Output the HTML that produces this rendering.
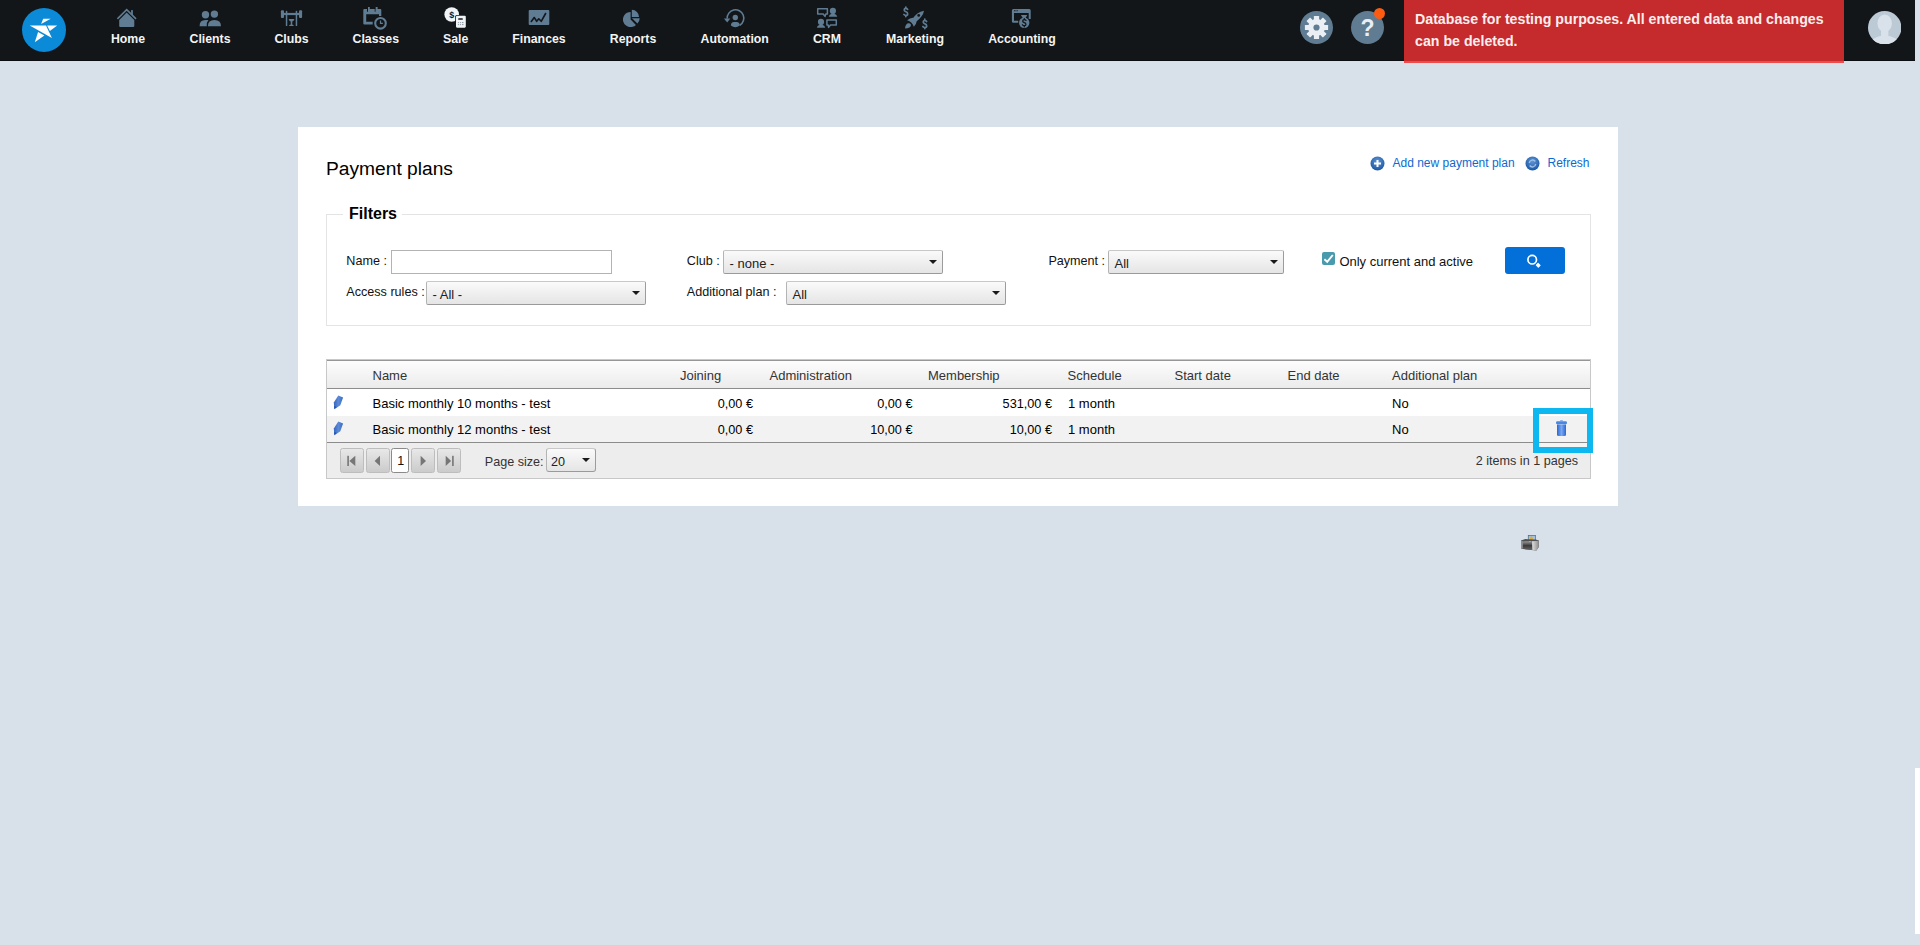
<!DOCTYPE html>
<html><head><meta charset="utf-8">
<style>
*{margin:0;padding:0;box-sizing:border-box}
html,body{width:1920px;height:945px;overflow:hidden;background:#d8e1ea;font-family:"Liberation Sans",sans-serif}
.a{position:absolute}
.t{position:absolute;line-height:1;white-space:nowrap}
#nav{position:absolute;left:0;top:0;width:1915px;height:61px;background:#121619;border-bottom:1px solid #0b0d10}
.nl{position:absolute;top:33px;font-weight:bold;font-size:12.3px;color:#f4f4f4;line-height:1;white-space:nowrap;transform:translateX(-50%)}
.ic{position:absolute;fill:#5f7c93}
.lbl{position:absolute;line-height:1;white-space:nowrap;font-size:12.6px;color:#111}
.sel{position:absolute;height:24px;width:220px;border:1px solid #b4b4b4;border-right-color:#9c9c9c;border-bottom-color:#9a9a9a;border-top-color:#c8c8c8;border-radius:2px;background:linear-gradient(#fafafa,#e5e5e5)}
.sel span{position:absolute;left:5.5px;top:5.5px;font-size:13px;line-height:1;color:#222;white-space:nowrap}
.sel i{position:absolute;right:5px;top:9px;width:0;height:0;border-left:4px solid transparent;border-right:4px solid transparent;border-top:4.5px solid #1a1a1a}
.gt{position:absolute;line-height:1;white-space:nowrap;font-size:13px;color:#000}
.gh{position:absolute;line-height:1;white-space:nowrap;font-size:13px;color:#333;top:369px}
.gr{text-align:right;transform:translateX(-100%)}
.num{font-size:12.7px}
.pb{position:absolute;top:448px;height:24.5px;width:23.5px;border:1px solid #bdbdbd;border-radius:2.5px;background:linear-gradient(#e8e8e8,#cbcbcb)}
#panel{position:absolute;left:298px;top:127px;width:1320px;height:379px;background:#fff}
</style></head>
<body>
<div id="nav">
  <svg class="a" style="left:22px;top:8px" width="44" height="44" viewBox="0 0 44 44">
    <circle cx="22" cy="22" r="22" fill="#0b8ad8"/>
    <polygon fill="#fff" points="7.7,17.4 24,17.4 29.9,29.9"/>
    <polygon fill="#fff" points="25.1,17.4 35.2,17.4 27.9,22.9"/>
    <polygon fill="#fff" points="16.1,24 22.4,27.5 12.8,34.3"/>
    <polygon fill="#fff" points="21.2,10.8 28.7,10.8 19.1,16.1"/>
  </svg>

  <!-- Home -->
  <svg class="a" style="left:112px;top:4px" width="30" height="28" viewBox="0 0 30 28">
    <polyline points="5.4,14.9 14.7,5.6 24,14.9" fill="none" stroke="#5f7c93" stroke-width="1.6"/>
    <rect x="19.1" y="6.1" width="1.8" height="4.8" fill="#5f7c93"/>
    <path d="M7.2,16 L14.7,8.6 L22.3,16 L22.3,22 Q22.3,23.1 21.2,23.1 L8.3,23.1 Q7.2,23.1 7.2,22 Z" fill="#5f7c93"/>
  </svg>
  <!-- Clients -->
  <svg class="a" style="left:196px;top:4px" width="30" height="28" viewBox="0 0 30 28">
    <circle cx="9.5" cy="10.8" r="3.7" fill="#5f7c93"/>
    <circle cx="18.4" cy="10.1" r="3.7" fill="#5f7c93"/>
    <path d="M3.6,22.2 Q3.4,16 9.6,16 L12.4,16 Q10.4,18.2 10.8,22.2 Z" fill="#5f7c93"/>
    <path d="M11.9,22.2 Q11.9,16 18.4,16 Q25,16 25,22.2 Z" fill="#5f7c93"/>
  </svg>
  <!-- Clubs -->
  <svg class="a" style="left:276px;top:4px" width="30" height="28" viewBox="0 0 30 28">
    <rect x="4.9" y="6.2" width="3.1" height="7.7" rx="1" fill="#5f7c93"/>
    <rect x="23" y="6.2" width="3.1" height="7.7" rx="1" fill="#5f7c93"/>
    <rect x="8" y="8.9" width="15" height="2.2" fill="#5f7c93"/>
    <rect x="9.8" y="6.8" width="1.5" height="15.3" rx=".7" fill="#5f7c93"/>
    <rect x="19.7" y="6.8" width="1.5" height="15.3" rx=".7" fill="#5f7c93"/>
    <path d="M12.7,15.6 Q12.7,15 13.4,15 L17.7,15 Q18.4,15 18.4,15.6 Q17.8,17.2 16.3,17.4 L16.2,20.6 Q17.8,20.8 17.8,22.1 L13,22.1 Q13,20.8 14.8,20.6 L14.7,17.4 Q13.2,17.2 12.7,15.6 Z" fill="#5f7c93"/>
  </svg>
  <!-- Classes -->
  <svg class="a" style="left:360px;top:4px" width="30" height="28" viewBox="0 0 30 28">
    <path d="M4.3,5 L20.3,5 Q21.3,5 21.3,6 L21.3,11.9 L19,11.9 L19,10.2 L6.2,10.2 L6.2,17.8 L12.7,17.8 L12.7,20.5 L4.3,20.5 Q3.3,20.5 3.3,19.5 L3.3,6 Q3.3,5 4.3,5 Z" fill="#5f7c93"/>
    <rect x="7" y="4.8" width="1" height="2.9" fill="#13171b"/><rect x="14.7" y="4.8" width="1" height="2.9" fill="#13171b"/>
    <rect x="8" y="3" width="1.8" height="4.7" fill="#5f7c93"/>
    <rect x="15.7" y="3" width="1.9" height="4.7" fill="#5f7c93"/>
    <circle cx="20.5" cy="19.3" r="5.3" fill="none" stroke="#5f7c93" stroke-width="2.1"/>
    <polyline points="20.5,16.6 20.5,19.3 22.9,19.3" fill="none" stroke="#5f7c93" stroke-width="1.2"/>
  </svg>
  <!-- Sale -->
  <svg class="a" style="left:440px;top:4px" width="30" height="28" viewBox="0 0 30 28">
    <circle cx="11.7" cy="10.5" r="7.3" fill="#f1f4f7"/>
    <text x="11.8" y="14.2" font-family="Liberation Sans" font-weight="bold" font-size="9" text-anchor="middle" fill="#13171b">$</text>
    <rect x="15.2" y="10.9" width="11.4" height="13.6" rx="1.6" fill="#13171b"/>
    <rect x="16" y="11.7" width="9.8" height="12" rx="1.1" fill="#f1f4f7"/>
    <rect x="18.2" y="14.2" width="4.6" height="1.5" rx=".5" fill="#13171b"/>
    <g fill="#8d959c"><rect x="17.9" y="18.1" width="1" height="1"/><rect x="19.9" y="18.1" width="1" height="1"/><rect x="21.9" y="18.1" width="1.6" height="1"/><rect x="17.9" y="20.1" width="1" height="1"/><rect x="19.9" y="20.1" width="1" height="1"/><rect x="21.9" y="20.1" width="1.6" height="1"/></g>
  </svg>
  <!-- Finances -->
  <svg class="a" style="left:524px;top:4px" width="30" height="28" viewBox="0 0 30 28">
    <rect x="4.7" y="6.1" width="20.6" height="14.8" rx=".9" fill="#5f7c93"/>
    <polyline points="7.3,17.5 10.2,13.5 12.7,17.3 14.8,14.8 17.2,17.3 21.6,9.5" fill="none" stroke="#13171b" stroke-width="1.6" stroke-linejoin="round" stroke-linecap="round"/>
  </svg>
  <!-- Reports -->
  <svg class="a" style="left:617px;top:4px" width="30" height="28" viewBox="0 0 30 28">
    <path d="M13.6,15.5 L13.6,7.9 A7.6,7.6 0 1 0 18.9,20.9 Z" fill="#5f7c93"/>
    <path d="M14.8,13.1 L14.8,5.8 A7.3,7.3 0 0 1 22.1,13.1 Z" fill="#5f7c93"/>
    <path d="M15,14.2 L22.7,14.2 A7.7,7.7 0 0 1 20.4,19.6 Z" fill="#5f7c93"/>
  </svg>
  <!-- Automation -->
  <svg class="a" style="left:719px;top:4px" width="30" height="28" viewBox="0 0 30 28">
    <path d="M8.2,14.6 A8.3,8.3 0 1 1 20.8,21.2" fill="none" stroke="#5f7c93" stroke-width="1.6"/>
    <polygon points="4.9,14.4 11.3,14.4 8.2,18.5" fill="#5f7c93"/>
    <circle cx="16.3" cy="13.5" r="2.7" fill="#5f7c93"/>
    <path d="M11.9,21.6 Q11.9,18.1 15,18.1 L17.6,18.1 Q20.8,18.1 20.8,21.6 Q18.5,23.3 16.3,23.3 Q14,23.3 11.9,21.6 Z" fill="#5f7c93"/>
  </svg>
  <!-- CRM -->
  <svg class="a" style="left:812px;top:4px" width="30" height="28" viewBox="0 0 30 28">
    <path d="M5.7,4.8 L15.4,4.8 L15.4,10 L13.8,10 L13,12.4 L11.2,10 L5.7,10 Z" fill="none" stroke="#5f7c93" stroke-width="1.5" stroke-linejoin="round"/>
    <circle cx="20.9" cy="6.9" r="3.1" fill="#5f7c93"/>
    <path d="M16.8,12.8 Q17.3,9.8 20.9,9.8 Q24.6,9.8 25.2,12.8 Z" fill="#5f7c93"/>
    <circle cx="9" cy="17.9" r="3.1" fill="#5f7c93"/>
    <path d="M4.9,23.8 Q5.4,20.8 9,20.8 Q12.7,20.8 13.2,23.8 Z" fill="#5f7c93"/>
    <path d="M14.9,15.9 L24.3,15.9 L24.3,21 L18.5,21 L16.6,23.4 L16.2,21 L14.9,21 Z" fill="none" stroke="#5f7c93" stroke-width="1.5" stroke-linejoin="round"/>
  </svg>
  <!-- Marketing -->
  <svg class="a" style="left:900px;top:4px" width="30" height="28" viewBox="0 0 30 28">
    <g fill="none" stroke="#5f7c93" stroke-width="1.7" stroke-linecap="round">
      <path d="M7.6,5.4 Q7,4.4 5.8,4.4 Q4.2,4.4 4.2,6 Q4.2,7.3 5.9,7.8 Q7.7,8.3 7.7,9.9 Q7.7,11.4 5.8,11.4 Q4.4,11.4 3.9,10.4 M5.8,3.1 V4.2 M5.8,11.6 V12.6"/>
      <path d="M26.6,17.5 Q26,16.5 24.8,16.5 Q23.2,16.5 23.2,18.1 Q23.2,19.4 24.9,19.9 Q26.7,20.4 26.7,22 Q26.7,23.5 24.8,23.5 Q23.4,23.5 22.9,22.5 M24.8,15.2 V16.3 M24.8,23.7 V24.6"/>
    </g>
    <path d="M24,6.8 Q20.5,7.2 17.4,9.6 Q15,11.6 13.4,13.8 Q10,13.6 7.1,16.3 Q9.8,17 11.2,18.4 Q12.8,19.9 13.8,22.7 Q16.5,20 16.7,17.3 Q19.6,15 21.6,12.3 Q23.6,9.6 24,6.8 Z" fill="#5f7c93"/>
    <circle cx="18.7" cy="11.4" r="1.4" fill="#13171b"/>
    <path d="M5.1,24.4 Q5.2,20.5 7.9,19.3 Q9.9,18.8 10.9,20.4 Q11.3,22.3 9.4,23.4 Q7.5,24.3 5.1,24.4 Z" fill="#5f7c93"/>
  </svg>
  <!-- Accounting -->
  <svg class="a" style="left:1007px;top:4px" width="30" height="28" viewBox="0 0 30 28">
    <path d="M6.4,4.9 L22.2,4.9 Q23.7,4.9 23.7,6.4 L23.7,15 L21.7,15 L21.7,8.9 L7,8.9 L7,16.4 Q7,16.7 7.3,16.7 L11.2,16.7 L11.2,18.7 L6.4,18.7 Q4.9,18.7 4.9,17.2 L4.9,6.4 Q4.9,4.9 6.4,4.9 Z" fill="#5f7c93"/>
    <g fill="#13171b"><rect x="7" y="6.3" width="1" height=".9"/><rect x="8.4" y="6.3" width="1" height=".9"/><rect x="9.8" y="6.3" width="1" height=".9"/></g>
    <circle cx="17.2" cy="18.7" r="5.2" fill="#5f7c93"/>
    <path d="M13.9,11.1 L20.2,11.1 L18.5,14.3 L15.9,14.3 Z" fill="#5f7c93"/>
    <path d="M19,16.4 Q18.5,15.6 17.3,15.6 Q15.7,15.6 15.7,17 Q15.7,18.2 17.3,18.6 Q18.9,19 18.9,20.4 Q18.9,21.7 17.2,21.7 Q15.9,21.7 15.4,20.8 M17.3,14.6 V15.5 M17.3,21.8 V22.8" fill="none" stroke="#13171b" stroke-width="1.3" stroke-linecap="round"/>
  </svg>
  <!-- right side -->
  <div class="a" style="left:1300px;top:11px;width:33px;height:33px;border-radius:50%;background:#607c92"></div>
  <svg class="a" style="left:1300px;top:11px" width="33" height="33" viewBox="0 0 33 33">
    <g transform="translate(16.5,16.5)" fill="#e9eff4">
      <circle r="8.4"/>
      <g id="teeth"><rect x="-2.6" y="-11.6" width="5.2" height="5" rx=".5"/><rect x="-2.6" y="6.6" width="5.2" height="5" rx=".5"/></g>
      <use href="#teeth" transform="rotate(45)"/><use href="#teeth" transform="rotate(90)"/><use href="#teeth" transform="rotate(135)"/>
      <circle r="3.1" fill="#607c92"/>
    </g>
  </svg>
  <div class="a" style="left:1351px;top:11px;width:33px;height:33px;border-radius:50%;background:#607c92"></div>
  <div class="t" style="left:1359px;top:17px;font-size:23px;font-weight:bold;color:#e9eff4;width:17px;text-align:center">?</div>
  <div class="a" style="left:1374px;top:7.6px;width:11.4px;height:11.4px;border-radius:50%;background:#fe5a10"></div>
  <div class="a" style="left:1404px;top:0;width:440px;height:61px;background:#c52a2c;border-bottom:2px solid #ee4b4d;height:63px"></div>
  <div class="t" style="left:1415px;top:7.8px;font-size:14.2px;font-weight:bold;color:#fbeeee;line-height:22px">Database for testing purposes. All entered data and changes<br>can be deleted.</div>
  <svg class="a" style="left:1868px;top:10.6px" width="33.4" height="33.4" viewBox="0 0 33 33">
    <defs><clipPath id="cc"><circle cx="16.5" cy="16.5" r="16.5"/></clipPath></defs>
    <circle cx="16.5" cy="16.5" r="16.5" fill="#bccad6"/>
    <g clip-path="url(#cc)" fill="#d9e2ea">
      <ellipse cx="16.5" cy="12.2" rx="7.1" ry="8.7"/>
      <ellipse cx="16.5" cy="33.6" rx="14.5" ry="9.5"/>
      <rect x="12.9" y="18" width="7.2" height="8"/>
    </g>
  </svg>
  <div class="nl" style="left:128px">Home</div>
  <div class="nl" style="left:210px">Clients</div>
  <div class="nl" style="left:291.5px">Clubs</div>
  <div class="nl" style="left:375.8px">Classes</div>
  <div class="nl" style="left:455.6px">Sale</div>
  <div class="nl" style="left:539px">Finances</div>
  <div class="nl" style="left:633px">Reports</div>
  <div class="nl" style="left:734.7px">Automation</div>
  <div class="nl" style="left:827px">CRM</div>
  <div class="nl" style="left:915px">Marketing</div>
  <div class="nl" style="left:1022px">Accounting</div>
</div>
<div id="panel">
</div>
<div class="t" style="left:326px;top:159px;font-size:19.2px;color:#000">Payment plans</div>
<!-- links -->
<svg class="a" style="left:1370px;top:155.5px" width="15" height="15" viewBox="0 0 15 15">
  <defs><radialGradient id="bg1" cx="50%" cy="35%" r="60%"><stop offset="0" stop-color="#5f95d4"/><stop offset="1" stop-color="#1f5ca8"/></radialGradient></defs>
  <circle cx="7.5" cy="7.5" r="7" fill="url(#bg1)"/>
  <path d="M7.5,4 V11 M4,7.5 H11" stroke="#fff" stroke-width="2"/>
</svg>
<div class="t" style="left:1392.5px;top:156.6px;font-size:12px;color:#0b6ad0">Add new payment plan</div>
<svg class="a" style="left:1525px;top:155.5px" width="15" height="15" viewBox="0 0 15 15">
  <circle cx="7.5" cy="7.5" r="7" fill="url(#bg1)"/>
  <path d="M4.3,7 A3.3,3.3 0 0 1 10.3,5.5 M10.7,8 A3.3,3.3 0 0 1 4.7,9.5" fill="none" stroke="#9ec0e8" stroke-width="1.4"/>
</svg>
<div class="t" style="left:1547.5px;top:156.6px;font-size:12px;color:#0b6ad0">Refresh</div>
<!-- fieldset -->
<div class="a" style="left:326px;top:214px;width:1265px;height:112px;border:1px solid #e4e4e4"></div>
<div class="a" style="left:343px;top:205px;width:59px;height:16px;background:#fff"></div>
<div class="t" style="left:349px;top:206.3px;font-size:16px;font-weight:bold;color:#000">Filters</div>
<div class="lbl" style="left:346.3px;top:254.6px">Name :</div>
<div class="a" style="left:391px;top:250px;width:221px;height:24px;border:1px solid #b3b3b3;background:#fff"></div>
<div class="lbl" style="left:346.3px;top:286.3px">Access rules :</div>
<div class="sel" style="left:426px;top:281px"><span>- All -</span><i></i></div>
<div class="lbl" style="left:686.8px;top:254.6px">Club :</div>
<div class="sel" style="left:723px;top:250px"><span>- none -</span><i></i></div>
<div class="lbl" style="left:686.8px;top:286.3px">Additional plan :</div>
<div class="sel" style="left:786px;top:281px"><span>All</span><i></i></div>
<div class="lbl" style="left:1048.4px;top:254.6px">Payment :</div>
<div class="sel" style="left:1108px;top:250px;width:176px"><span>All</span><i></i></div>

<!-- grid -->
<div class="a" style="left:326px;top:359px;width:1265px;height:120px;border:1px solid #c8c8c8;background:#ededed"></div>
<div class="a" style="left:327px;top:360px;width:1263px;height:1px;background:#979797"></div>
<div class="a" style="left:327px;top:361px;width:1263px;height:27px;background:linear-gradient(#fdfdfd,#ebebeb)"></div>
<div class="a" style="left:327px;top:388px;width:1263px;height:1px;background:#8c8c8c"></div>
<div class="a" style="left:327px;top:389px;width:1263px;height:27px;background:#fff"></div>
<div class="a" style="left:327px;top:416px;width:1263px;height:26px;background:#f2f2f2"></div>
<div class="a" style="left:327px;top:442px;width:1263px;height:1px;background:#8c8c8c"></div>
<div class="gh" style="left:372.5px">Name</div>
<div class="gh" style="left:680px">Joining</div>
<div class="gh" style="left:769.5px">Administration</div>
<div class="gh" style="left:928px">Membership</div>
<div class="gh" style="left:1067.5px">Schedule</div>
<div class="gh" style="left:1174.5px">Start date</div>
<div class="gh" style="left:1287.5px">End date</div>
<div class="gh" style="left:1392px">Additional plan</div>
<svg class="a" style="left:330px;top:392px" width="18" height="20" viewBox="0 0 18 20"><defs><linearGradient id="pg" x1="0" y1="0" x2="1" y2="0"><stop offset="0" stop-color="#3567c0"/><stop offset=".5" stop-color="#5b8ad6"/><stop offset="1" stop-color="#3a6cc4"/></linearGradient></defs><polygon points="8.3,3.6 13.1,5.6 10.3,13.2 5.9,16.3 4.3,17.2 3.8,10.4" fill="url(#pg)"/><polygon points="4.1,14 6.6,15 4.4,17" fill="#2450a8"/></svg>
<svg class="a" style="left:330px;top:418.3px" width="18" height="20" viewBox="0 0 18 20"><polygon points="8.3,3.6 13.1,5.6 10.3,13.2 5.9,16.3 4.3,17.2 3.8,10.4" fill="url(#pg)"/><polygon points="4.1,14 6.6,15 4.4,17" fill="#2450a8"/></svg>
<div class="gt" style="left:372.5px;top:397px">Basic monthly 10 months - test</div>
<div class="gt gr num" style="left:753px;top:397.8px">0,00 €</div>
<div class="gt gr num" style="left:912.5px;top:397.8px">0,00 €</div>
<div class="gt gr num" style="left:1052px;top:397.8px">531,00 €</div>
<div class="gt" style="left:1068px;top:397px">1 month</div>
<div class="gt" style="left:1392px;top:397px">No</div>
<div class="gt" style="left:372.5px;top:422.8px">Basic monthly 12 months - test</div>
<div class="gt gr num" style="left:753px;top:423.6px">0,00 €</div>
<div class="gt gr num" style="left:912.5px;top:423.6px">10,00 €</div>
<div class="gt gr num" style="left:1052px;top:423.6px">10,00 €</div>
<div class="gt" style="left:1068px;top:422.8px">1 month</div>
<div class="gt" style="left:1392px;top:422.8px">No</div>
<!-- pager -->
<div class="pb" style="left:340px"></div>
<div class="pb" style="left:366px"></div>
<div class="a" style="left:391px;top:448px;width:18px;height:24.5px;border:1px solid #8a8a8a;border-radius:2.5px;background:#fff"></div>
<div class="pb" style="left:411px"></div>
<div class="pb" style="left:437px"></div>
<svg class="a" style="left:336px;top:444px" width="130" height="34" viewBox="0 0 130 34">
  <g fill="#767676">
    <rect x="11.3" y="11.8" width="1.6" height="10.2"/><polygon points="19.3,11.8 19.3,22 13.4,16.9"/>
    <polygon points="44,11.8 44,22 38.6,16.9"/>
    <polygon points="84.6,11.8 84.6,22 90,16.9"/>
    <polygon points="109.7,11.8 109.7,22 115.1,16.9"/><rect x="116.1" y="11.8" width="1.6" height="10.2"/>
  </g>
</svg>
<div class="t" style="left:397.3px;top:454.8px;font-size:12.5px;color:#111">1</div>
<div class="t" style="left:484.8px;top:455.6px;font-size:12.6px;color:#333">Page size:</div>
<div class="sel" style="left:545.5px;top:448.4px;width:50px;border-radius:3px"><span style="left:4.5px;top:6.2px;font-size:12.6px">20</span><i style="top:9px;right:5px"></i></div>
<div class="t gr" style="left:1578px;top:455.2px;font-size:12.6px;color:#333">2 items in 1 pages</div>
<!-- trash highlight -->
<div class="a" style="left:1539px;top:443px;width:48.5px;height:3.5px;background:#f7f5f3"></div>
<svg class="a" style="left:1550px;top:418px" width="22" height="20" viewBox="0 0 22 20"><defs><linearGradient id="tg" x1="0" y1="0" x2="1" y2="0"><stop offset="0" stop-color="#2a66d8"/><stop offset=".5" stop-color="#7aa8ee"/><stop offset="1" stop-color="#2a66d8"/></linearGradient></defs>
  <rect x="6" y="3.3" width="11" height="3" rx="1.4" fill="#4a86e4"/><rect x="10" y="2.3" width="3" height="1.5" rx=".7" fill="#6a9ce8"/>
  <path d="M7,6.5 H16 V16.5 Q16,18 14.5,18 H8.5 Q7,18 7,16.5 Z" fill="url(#tg)"/>
</svg>
<div class="a" style="left:1533px;top:407.5px;width:60px;height:45px;border:6px solid #0db7ef"></div>
<!-- printer -->
<svg class="a" style="left:1519px;top:533px" width="22" height="20" viewBox="0 0 22 20">
  <defs>
   <linearGradient id="pr1" x1="0" y1="0" x2="0" y2="1"><stop offset="0" stop-color="#9a9a9a"/><stop offset=".5" stop-color="#3a3a3a"/><stop offset="1" stop-color="#666"/></linearGradient>
   <linearGradient id="pr2" x1="0" y1="0" x2="1" y2="0"><stop offset="0" stop-color="#e0e0e0"/><stop offset="1" stop-color="#8a8a8a"/></linearGradient>
  </defs>
  <rect x="8.9" y="2" width="7.9" height="6" fill="#56687c"/>
  <rect x="9.6" y="2.7" width="6.5" height="5.3" fill="#9fc3e6"/>
  <ellipse cx="12.4" cy="5.3" rx="1.3" ry="2" fill="#e4aa26"/>
  <path d="M2,7.4 L6.4,6.1 L9,6.3 L16.8,6.6 L19.9,7.6 L19.9,13.8 L17.4,17.6 L2.2,15.8 Z" fill="#505050"/>
  <path d="M13,8.2 L19.9,7.8 L19.9,13.8 L17.4,17.6 L13.2,17 Z" fill="url(#pr2)"/>
  <path d="M3.6,8.4 L13,8.2 L13.2,17 L3.6,15.9 Z" fill="url(#pr1)"/>
  <rect x="2.3" y="8" width="1.3" height="7.6" fill="#a8a8a8"/>
  <rect x="10" y="8.3" width="2" height=".7" fill="#86d486"/>
</svg>
<div class="a" style="left:1915px;top:768px;width:5px;height:166px;background:#fff"></div>
<svg class="a" style="left:1322px;top:251.5px" width="13" height="13" viewBox="0 0 13 13">
  <rect width="13" height="13" rx="2" fill="#4a9aae"/>
  <polyline points="2.4,7.3 5.2,9.8 10.8,3" fill="none" stroke="#fff" stroke-width="1.9"/>
</svg>
<div class="t" style="left:1339.4px;top:255.2px;font-size:13px;color:#111">Only current and active</div>
<div class="a" style="left:1505px;top:247px;width:60px;height:27px;border-radius:3px;background:#036fd9"></div>
<svg class="a" style="left:1505px;top:247px" width="60" height="27" viewBox="0 0 60 27">
  <circle cx="27.2" cy="12.7" r="4.3" fill="none" stroke="#fff" stroke-width="1.7"/>
  <rect x="31.2" y="16.5" width="4" height="3.6" rx=".6" transform="rotate(45 33.2 18.3)" fill="#fff"/>
</svg>


</body></html>
